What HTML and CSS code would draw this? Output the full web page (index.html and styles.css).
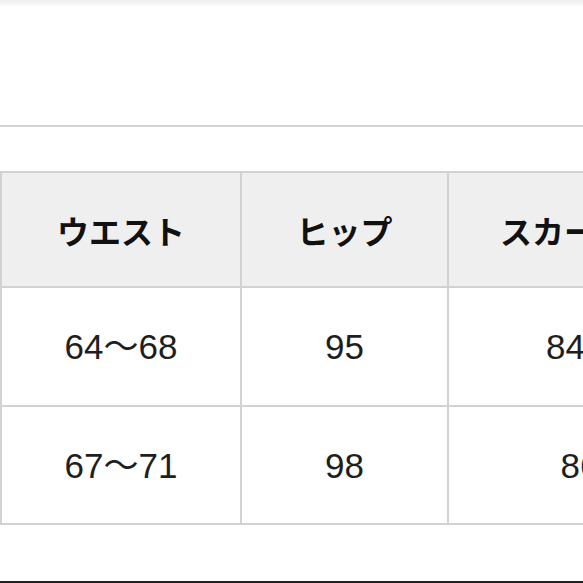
FILE: index.html
```html
<!DOCTYPE html>
<html lang="ja">
<head>
<meta charset="utf-8">
<link rel="stylesheet" href="styles.css">
</head>
<body>
<div class="page">
  <div class="topband"></div>
  <div class="header-space"></div>
  <div class="table-wrap">
    <table class="size-table">
      <colgroup>
        <col class="c1"><col class="c2"><col class="c3">
      </colgroup>
      <thead>
        <tr><th>ウエスト</th><th>ヒップ</th><th>スカート丈</th></tr>
      </thead>
      <tbody>
        <tr class="r1"><td>64～68</td><td>95</td><td>84.5</td></tr>
        <tr class="r2"><td>67～71</td><td>98</td><td>86</td></tr>
      </tbody>
    </table>
  </div>
  <div class="bottom-space"></div>
  <div class="footer-line"></div>
</div>
</body>
</html>
```
FILE: styles.css
```css
html, body {
  margin: 0;
  padding: 0;
  background: #fff;
  overflow: hidden;
}
.page {
  width: 583px;
  height: 583px;
  overflow: hidden;
  display: flex;
  flex-direction: column;
  font-family: "Noto Sans CJK JP", "Noto Sans", sans-serif;
  color: #1a1a1a;
}
.topband {
  height: 7px;
  flex: none;
  background: linear-gradient(#efefef, #f5f5f5 50%, #ffffff);
}
.header-space {
  height: 118px;
  flex: none;
  border-bottom: 2px solid #d4d4d4;
}
.table-wrap {
  margin-top: 44px;
  flex: none;
  width: 583px;
  overflow: hidden;
}
.size-table {
  border-collapse: collapse;
  table-layout: fixed;
  width: 711px;
  margin-left: 0;
}
.c1 { width: 240px; }
.c2 { width: 207px; }
.c3 { width: 264px; }
.size-table th,
.size-table td {
  border: 2px solid #d2d2d2;
  text-align: center;
  padding: 0;
  line-height: 1;
}
.size-table th {
  background: #efefef;
  font-weight: 700;
  font-size: 32px;
  height: 113px;
  color: #111;
}
.size-table td {
  font-size: 35px;
  font-weight: 400;
  color: #1e1e1e;
  font-family: "Liberation Sans", "Noto Sans CJK JP", sans-serif;
}
.r1 td { height: 117px; }
.r2 td { height: 116px; }
.bottom-space {
  flex: 1;
}
.footer-line {
  flex: none;
  height: 2px;
  background: #222;
}
```
